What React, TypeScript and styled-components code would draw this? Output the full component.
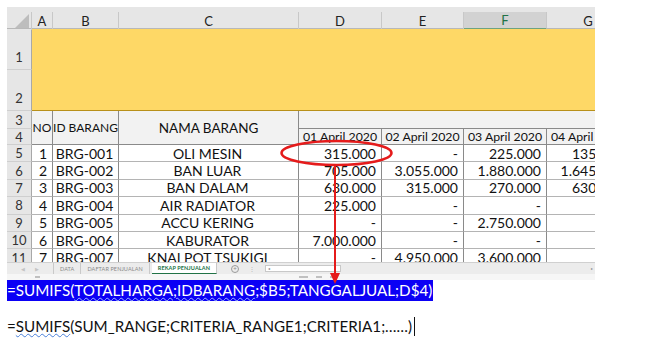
import React from 'react';
import styled, { createGlobalStyle, css } from 'styled-components';

const Global = createGlobalStyle`
  html, body { margin: 0; padding: 0; background: #ffffff; }
  body { width: 658px; height: 346px; overflow: hidden; font-family: Lato, "Liberation Sans", sans-serif; }
`;

const COLS = '25px 21px 66px 180px 83px 82px 83px 83px';

const Page = styled.div`
  position: relative;
  width: 658px;
  height: 346px;
  box-sizing: border-box;
  padding: 7px 0 0 7px;
  display: flex;
  flex-direction: column;
`;

const Sheet = styled.div`
  width: 588px;
  display: flex;
  flex-direction: column;
  overflow: hidden;
`;

const ColHeaderRow = styled.div`
  display: grid;
  grid-template-columns: ${COLS};
  height: 22px;
  box-sizing: border-box;
  padding-top: 5px;
  background: #e6e6e6;
  border-bottom: 1px solid #b8b8b8;
`;

const Corner = styled.div`
  position: relative;
  border-right: 1px solid #c8c8c8;
  &::after {
    content: '';
    position: absolute;
    right: 2px;
    bottom: 2px;
    width: 0;
    height: 0;
    border-left: 14px solid transparent;
    border-bottom: 14px solid #bdbdbd;
  }
`;

const ColLetter = styled.div<{ $sel?: boolean }>`
  display: flex;
  align-items: center;
  justify-content: center;
  font-size: 13px;
  color: #222;
  border-right: 1px solid #c8c8c8;
  box-sizing: border-box;
  ${(p) =>
    p.$sel &&
    css`
      background: #d2d2d2;
      color: #217346;
      border-bottom: 2px solid #6fa37f;
    `}
`;

const Body = styled.div`
  display: grid;
  grid-template-columns: ${COLS};
  grid-template-rows: 41px 41px 18px 16px repeat(7, 17.4px);
  height: 233px;
  overflow: hidden;
`;

const RowHead = styled.div<{ $r: string; $bottom?: boolean }>`
  grid-column: 1;
  grid-row: ${(p) => p.$r};
  display: flex;
  justify-content: center;
  align-items: ${(p) => (p.$bottom ? 'flex-end' : 'center')};
  padding-bottom: ${(p) => (p.$bottom ? '4px' : '0')};
  box-sizing: border-box;
  background: #e6e6e6;
  border-right: 1px solid #a8a8a8;
  border-bottom: 1px solid #cfcfcf;
  font-size: 13px;
  color: #333;
`;

const Banner = styled.div`
  grid-column: 2 / -1;
  grid-row: 1 / 3;
  background: #fed866;
  border-bottom: 1.5px solid #b8901a;
`;

const HeadCell = styled.div<{ $c: string; $r: string; $size?: number }>`
  grid-column: ${(p) => p.$c};
  grid-row: ${(p) => p.$r};
  display: flex;
  align-items: center;
  justify-content: center;
  background: #f2f2f2;
  border-right: 1px solid #8a8a8a;
  border-bottom: 1px solid #8a8a8a;
  box-sizing: border-box;
  font-size: ${(p) => p.$size ?? 13.5}px;
  color: #111;
  white-space: nowrap;
  overflow: hidden;
`;

const Cell = styled.div<{ $c: number; $r: number; $align: 'left' | 'center' | 'right' }>`
  grid-column: ${(p) => p.$c};
  grid-row: ${(p) => p.$r};
  display: flex;
  align-items: center;
  justify-content: ${(p) =>
    p.$align === 'right' ? 'flex-end' : p.$align === 'center' ? 'center' : 'flex-start'};
  padding: 0 5px 0 3px;
  box-sizing: border-box;
  background: #ffffff;
  border-right: 1px solid #8a8a8a;
  border-bottom: 1px solid #b4b4b4;
  font-size: 14px;
  color: #111;
  white-space: nowrap;
  overflow: hidden;
`;

const TabBar = styled.div`
  display: flex;
  align-items: stretch;
  height: 11px;
  background: #ececec;
  border-top: 1px solid #d0d0d0;
  font-size: 5.5px;
  color: #8a8a8a;
  letter-spacing: 0.1px;
`;

const Nav = styled.div`
  width: 46px;
  display: flex;
  align-items: center;
  justify-content: center;
  gap: 9px;
  color: #c4c4c4;
  font-size: 5px;
  border-right: 1px solid #c9c9c9;
`;

const Tab = styled.div<{ $active?: boolean }>`
  display: flex;
  align-items: center;
  padding: 0 6px;
  border-right: 1px solid #c9c9c9;
  ${(p) =>
    p.$active &&
    css`
      background: #ffffff;
      color: #217346;
      font-weight: 700;
      border-bottom: 1.5px solid #217346;
      margin-left: 2px;
    `}
`;

const AddBtn = styled.div`
  width: 6px;
  height: 6px;
  margin: auto 10px auto 14px;
  border: 1px solid #9a9a9a;
  border-radius: 50%;
  font-size: 6px;
  line-height: 6px;
  text-align: center;
  color: #8a8a8a;
`;

const Dots = styled.div`
  display: flex;
  align-items: center;
  color: #b0b0b0;
  margin-right: 10px;
`;

const Scroll = styled.div`
  width: 72px;
  margin: 2px 0;
  background: #ffffff;
  border: 1px solid #c8c8c8;
  display: flex;
  align-items: center;
  padding-left: 2px;
  font-size: 4px;
  color: #777;
`;

const Spacer = styled.div`
  flex: 1;
`;

const EndArrow = styled.div`
  display: flex;
  align-items: center;
  padding-right: 2px;
  font-size: 4px;
  color: #888;
`;

const Status = styled.div`
  height: 6px;
  background: #f6f6f6;
  display: flex;
  align-items: center;
  padding-left: 28px;
`;

const StatusMark = styled.div<{ $w: number }>`
  width: ${(p) => p.$w}px;
  height: 2px;
  background: #c0c0c0;
`;

const StatusGroup = styled.div`
  display: flex;
  gap: 8px;
  align-items: center;
`;

const Formulas = styled.div`
  display: flex;
  flex-direction: column;
  align-items: flex-start;
  gap: 15px;
  font-family: Lato, "Liberation Sans", sans-serif;
  font-size: 15.2px;
  line-height: 21px;
`;

const Highlight = styled.div`
  background: #0b00f5;
  color: #ffffff;
  white-space: nowrap;
  padding-right: 1px;
`;

const Plain = styled.div`
  color: #111;
  white-space: nowrap;
  display: flex;
  align-items: center;
`;

const Wavy = styled.span<{ $light?: boolean }>`
  text-decoration: underline wavy ${(p) => (p.$light ? '#9db4ff' : '#4a7fd8')};
  text-decoration-thickness: 1px;
  text-underline-offset: 1px;
`;

const Caret = styled.span`
  display: inline-block;
  width: 1px;
  height: 19px;
  background: #111;
  margin-left: 2px;
`;

const Overlay = styled.svg`
  position: absolute;
  left: 0;
  top: 0;
  pointer-events: none;
`;

type Row = [string, string, string, string, string, string, string];

const rows: Row[] = [
  ['1', 'BRG-001', 'OLI MESIN', '315.000', '-', '225.000', '135.000'],
  ['2', 'BRG-002', 'BAN LUAR', '705.000', '3.055.000', '1.880.000', '1.645.000'],
  ['3', 'BRG-003', 'BAN DALAM', '630.000', '315.000', '270.000', '630.000'],
  ['4', 'BRG-004', 'AIR RADIATOR', '225.000', '-', '-', ''],
  ['5', 'BRG-005', 'ACCU KERING', '-', '-', '2.750.000', ''],
  ['6', 'BRG-006', 'KABURATOR', '7.000.000', '-', '-', ''],
  ['7', 'BRG-007', 'KNALPOT TSUKIGI', '-', '4.950.000', '3.600.000', ''],
];

const letters = ['A', 'B', 'C', 'D', 'E', 'F', 'G'];
const dates = ['01 April 2020', '02 April 2020', '03 April 2020', '04 April 2020'];

export default function App() {
  return (
    <Page>
      <Global />
      <Sheet>
        <ColHeaderRow>
          <Corner />
          {letters.map((l) => (
            <ColLetter key={l} $sel={l === 'F'}>
              {l}
            </ColLetter>
          ))}
        </ColHeaderRow>
        <Body>
          <RowHead $r="1" $bottom>1</RowHead>
          <RowHead $r="2" $bottom>2</RowHead>
          <Banner />
          <RowHead $r="3">3</RowHead>
          <RowHead $r="4">4</RowHead>
          <HeadCell $c="2" $r="3 / 5" $size={12}>NO</HeadCell>
          <HeadCell $c="3" $r="3 / 5" $size={12}>ID BARANG</HeadCell>
          <HeadCell $c="4" $r="3 / 5">NAMA BARANG</HeadCell>
          <HeadCell $c="5 / 9" $r="3" />
          {dates.map((d, i) => (
            <HeadCell key={d} $c={String(5 + i)} $r="4" $size={12.3}>
              {d}
            </HeadCell>
          ))}
          {rows.map((r, i) => {
            const rr = 5 + i;
            return (
              <React.Fragment key={r[1]}>
                <RowHead $r={String(rr)}>{rr}</RowHead>
                <Cell $c={2} $r={rr} $align="right">{r[0]}</Cell>
                <Cell $c={3} $r={rr} $align="center">{r[1]}</Cell>
                <Cell $c={4} $r={rr} $align="center">{r[2]}</Cell>
                <Cell $c={5} $r={rr} $align="right">{r[3]}</Cell>
                <Cell $c={6} $r={rr} $align="right">{r[4]}</Cell>
                <Cell $c={7} $r={rr} $align="right">{r[5]}</Cell>
                <Cell $c={8} $r={rr} $align="right">{r[6]}</Cell>
              </React.Fragment>
            );
          })}
        </Body>
        <TabBar>
          <Nav>
            <span>◀</span>
            <span>▶</span>
          </Nav>
          <Tab>DATA</Tab>
          <Tab>DAFTAR PENJUALAN</Tab>
          <Tab $active>REKAP PENJUALAN</Tab>
          <AddBtn>+</AddBtn>
          <Dots>⋮</Dots>
          <Scroll>◂</Scroll>
          <Spacer />
          <EndArrow>▸</EndArrow>
        </TabBar>
        <Status>
          <StatusMark $w={5} />
          <Spacer />
          <StatusGroup>
            <StatusMark $w={9} />
            <StatusMark $w={6} />
            <StatusMark $w={6} />
          </StatusGroup>
          <Spacer />
        </Status>
      </Sheet>
      <Formulas>
        <Highlight>
          =SUMIFS(<Wavy $light>TOTALHARGA;IDBARANG</Wavy>;$B5;TANGGALJUAL;D$4)
        </Highlight>
        <Plain>
          <span>
            =<Wavy>SUMIFS</Wavy>(SUM_RANGE;CRITERIA_RANGE1;CRITERIA1;……)
          </span>
          <Caret />
        </Plain>
      </Formulas>
      <Overlay width="658" height="346" viewBox="0 0 658 346">
        <ellipse cx="336.5" cy="153" rx="55" ry="12" fill="none" stroke="#e51b1b" strokeWidth="2.5" />
        <line x1="335" y1="165" x2="335" y2="275" stroke="#e51b1b" strokeWidth="2" />
        <polygon points="330,273 340,273 335,284" fill="#e51b1b" />
      </Overlay>
    </Page>
  );
}
